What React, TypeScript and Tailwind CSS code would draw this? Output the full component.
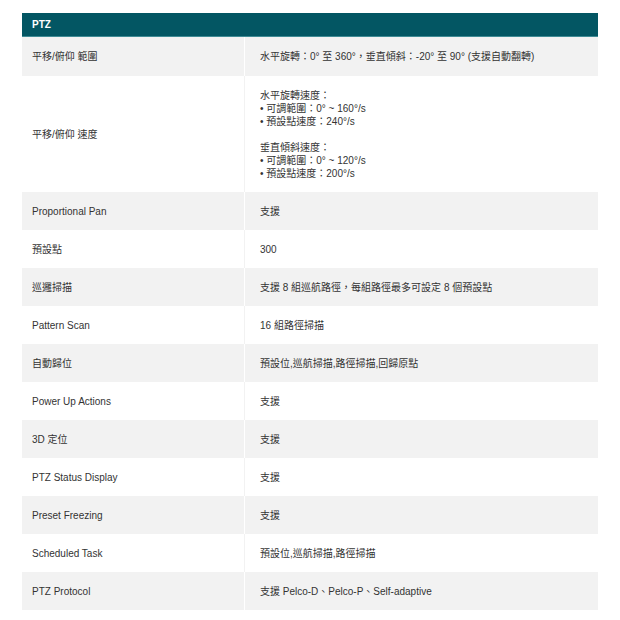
import React from "react";

const rows: { label: string; value: React.ReactNode }[] = [
  { label: "平移/俯仰 範圍", value: "水平旋轉：0° 至 360°，垂直傾斜：-20° 至 90° (支援自動翻轉)" },
  {
    label: "平移/俯仰 速度",
    value: (
      <>
        <div>水平旋轉速度：</div>
        <div>• 可調範圍：0° ~ 160°/s</div>
        <div>• 預設點速度：240°/s</div>
        <div className="h-[13px]"></div>
        <div>垂直傾斜速度：</div>
        <div>• 可調範圍：0° ~ 120°/s</div>
        <div>• 預設點速度：200°/s</div>
      </>
    ),
  },
  { label: "Proportional Pan", value: "支援" },
  { label: "預設點", value: "300" },
  { label: "巡邏掃描", value: "支援 8 組巡航路徑，每組路徑最多可設定 8 個預設點" },
  { label: "Pattern Scan", value: "16 組路徑掃描" },
  { label: "自動歸位", value: "預設位,巡航掃描,路徑掃描,回歸原點" },
  { label: "Power Up Actions", value: "支援" },
  { label: "3D 定位", value: "支援" },
  { label: "PTZ Status Display", value: "支援" },
  { label: "Preset Freezing", value: "支援" },
  { label: "Scheduled Task", value: "預設位,巡航掃描,路徑掃描" },
  { label: "PTZ Protocol", value: "支援 Pelco-D、Pelco-P、Self-adaptive" },
];

export default function App() {
  return (
    <div
      className="w-[620px] h-[620px] bg-white pt-[13px] pl-[22px]"
      style={{ fontFamily: '"Liberation Sans", Arial, "Noto Sans CJK TC", sans-serif' }}
    >
      <div className="w-[576px]">
        <div className="h-[24px] bg-[#035663] border-b border-[#3f8b95] flex items-center pl-[10px] text-white font-bold text-[10px]">
          PTZ
        </div>
        {rows.map((r, i) => {
          const gray = i % 2 === 0;
          return (
            <div
              key={i}
              className={`flex text-[10px] leading-[13px] text-[#333333] ${gray ? "bg-[#f2f2f2]" : "bg-white"} ${i === 0 ? "h-[39px]" : i === 1 ? "h-[116px]" : "h-[38px]"}`}
            >
              <div
                className={`w-[223px] shrink-0 flex items-center pl-[10px] border-r ${gray ? "border-white" : "border-[#f2f2f2]"}`}
              >
                {r.label}
              </div>
              <div className="flex-1 pl-[15px] flex flex-col justify-center">{r.value}</div>
            </div>
          );
        })}
      </div>
    </div>
  );
}
